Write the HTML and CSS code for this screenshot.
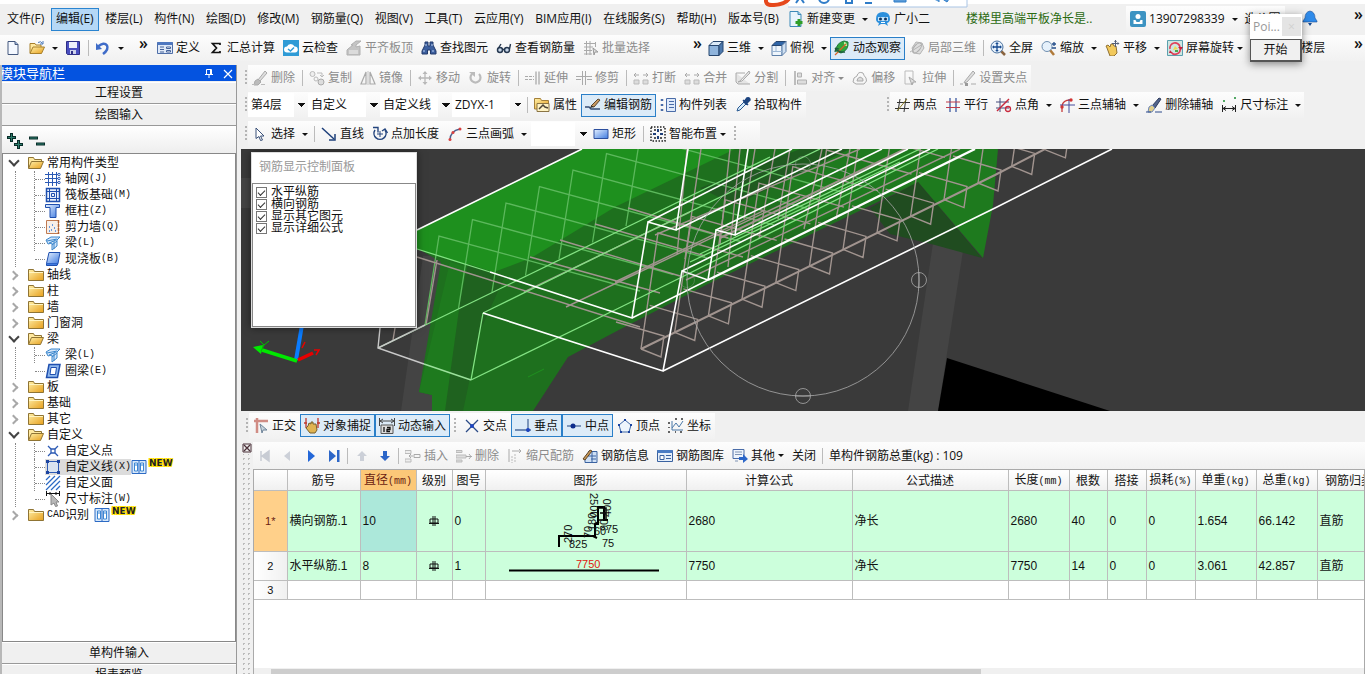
FILE: index.html
```html
<!DOCTYPE html>
<html lang="zh-CN">
<head>
<meta charset="utf-8">
<title>钢筋编辑</title>
<link rel="stylesheet" href="styles.css">
</head>
<body>
<svg class="sprite" aria-hidden="true">
<defs>
<linearGradient id="gold" x1="0" y1="0" x2="1" y2="1"><stop offset="0" stop-color="#fff0a8"/><stop offset="1" stop-color="#e79f1c"/></linearGradient>
<linearGradient id="blue" x1="0" y1="0" x2="1" y2="1"><stop offset="0" stop-color="#e4f0ff"/><stop offset="1" stop-color="#3f7be0"/></linearGradient>
</defs>
<symbol id="i-new" viewBox="0 0 16 16"><path d="M3 1.500h7l3 3v10H3z" fill="#f4f8ff" stroke="#44587e"/><path d="M10 1.500v3h3" fill="#9db4da" stroke="#44587e"/></symbol>
<symbol id="i-open" viewBox="0 0 16 16"><path d="M1 13V3.500h5l1 1.500h5v2" fill="#ffe9a0" stroke="#a8802c"/><path d="M1 13.500 4 7h11.500l-3 6.500z" fill="url(#gold)" stroke="#a8802c"/><path d="M9 2.500q3-2 4.500 1M14 1v3h-3" fill="none" stroke="#4a78b8"/></symbol>
<symbol id="i-save" viewBox="0 0 16 16"><path d="M1.500 1.500h13v13h-12l-1-1z" fill="#4a4fc0" stroke="#2e2f86"/><path d="M4 2h8v6H4z" fill="#eef1fb"/><path d="M5 10h6v4H5z" fill="#cdd2ea"/><path d="M6 11h2v3H6z" fill="#2e2f86"/></symbol>
<symbol id="i-undo" viewBox="0 0 16 16"><path d="M3 6.500Q9 1.500 12 5.500 14 9.500 8 14" fill="none" stroke="#3f6cc8" stroke-width="2.500"/><path d="M1 3v7l6-1z" fill="#3f6cc8"/></symbol>
<symbol id="i-define" viewBox="0 0 16 16"><path d="M.5 2.500h15v11H.5z" fill="#dfe9f8" stroke="#4f6fa8"/><path d="M.5 2h15v3H.5z" fill="#4f78c0"/><path d="M3 7h4M3 9.500h4M3 12h4" stroke="#44629a"/><path d="M9.500 7h4v1.500h-4zM9.500 10.500h4V12h-4z" fill="#fff" stroke="#44629a"/></symbol>
<symbol id="i-sum" viewBox="0 0 16 16"><path d="M12 5V3.500H4.500L8.500 8l-4 4.500H12V11" fill="none" stroke="#111" stroke-width="1.700"/></symbol>
<symbol id="i-cloud" viewBox="0 0 16 16"><path d="M0 0h16v16H0z" fill="#2f9bd6"/><path d="M4 12.500a3 3 0 0 1 0-6 4 4 0 0 1 7.500 0 3 3 0 0 1 .5 6z" fill="#fff"/><path d="m5 9 2.500 2L11 7.500" fill="none" stroke="#2f9bd6" stroke-width="1.500"/></symbol>
<symbol id="i-slab" viewBox="0 0 16 16"><path d="M2 9 7 5l-2 0 5-4 5 0-5 4v2l4-1v9H1v-5z" fill="#c4c4c4" stroke="#b0b0b0"/><path d="M3 11h9M3 13h9" stroke="#f2f2f2"/></symbol>
<symbol id="i-find" viewBox="0 0 16 16"><path d="M4 2h3v4h2V2h3v3l3 6v3H9.500v-4h-3v4H1v-3l3-6z" fill="#3c5f9e" stroke="#223a6a"/><path d="M3 10v2M12 10v2M5 4v2M11 4v2" stroke="#bcd2f4"/></symbol>
<symbol id="i-glasses" viewBox="0 0 16 16"><circle cx="4" cy="10" r="2.500" fill="#c8d8ea" stroke="#25374f" stroke-width="1.500"/><circle cx="11" cy="10" r="2.500" fill="#c8d8ea" stroke="#25374f" stroke-width="1.500"/><path d="M6.500 9.500h2M2.500 8 5 4M13.500 9l1-5" fill="none" stroke="#25374f" stroke-width="1.400"/></symbol>
<symbol id="i-batch" viewBox="0 0 16 16"><path d="M1 3.500h11M1 7h9M1 10.500h8M1 14h8M3.500 1v14M7 1v14M12.500 2v5" stroke="#aaa" fill="none"/><path d="m10 8 5 4-3 0-1 3z" fill="#ddd" stroke="#999"/></symbol>
<symbol id="i-cube" viewBox="0 0 16 16"><path d="M1 5.500h10v10H1z" fill="#8fb4dc" stroke="#27466e"/><path d="m1 5.500 4-4h10l-4 4z" fill="#dbeaf8" stroke="#27466e"/><path d="m11 5.500 4-4v10l-4 4z" fill="#4d79ad" stroke="#27466e"/></symbol>
<symbol id="i-topview" viewBox="0 0 16 16"><path d="M1 5.500h10v10H1z" fill="#eef5fc" stroke="#5d7fa8"/><path d="m1 5.500 4-4h10l-4 4z" fill="#2f65a8" stroke="#27466e"/><path d="m11 5.500 4-4v10l-4 4z" fill="#cfe0f2" stroke="#5d7fa8"/><path d="M5 6v5.500H1M5 11.500h6" fill="none" stroke="#9bb6d4"/></symbol>
<symbol id="i-orbit" viewBox="0 0 16 16"><path d="M2 11Q2 3 10 1l4 1q1 8-7 11z" fill="#32a53c" stroke="#1d7a3c"/><path d="M10 3q2 0 2 3" stroke="#c6f0a8" stroke-width="2" fill="none"/><path d="M1 15 12 4" stroke="#d8642a" stroke-width="1.200"/><path d="M1 8q4 5 10 4M1 12l1-4 3 1" fill="none" stroke="#1d5d3c" stroke-width="1.300"/></symbol>
<symbol id="i-orbitg" viewBox="0 0 16 16"><path d="m3 8 4-6 6 1 2 5-4 6-6-1z" fill="#ddd" stroke="#b4b4b4"/><ellipse cx="8" cy="8" rx="3" ry="6" transform="rotate(40 8 8)" fill="none" stroke="#aaa"/><path d="m1 12 13-8" stroke="#b4b4b4"/></symbol>
<symbol id="i-full" viewBox="0 0 16 16"><path d="m11 11 4 4" stroke="#8a6440" stroke-width="2.500"/><circle cx="7" cy="7" r="6" fill="#e6f1fb" stroke="#49719f"/><path d="M7 3v8M3 7h8" stroke="#174a90" stroke-width="1.300"/><path d="m7 2 1.800 2H5.200zM7 12l1.800-2H5.200zM2 7l2-1.800v3.600zM12 7l-2-1.800v3.600z" fill="#174a90"/></symbol>
<symbol id="i-zoom" viewBox="0 0 16 16"><path d="m9 10 4 5" stroke="#b07a3a" stroke-width="2.500"/><circle cx="6" cy="6.500" r="5" fill="#e6f1fb" stroke="#6f8fb0"/><path d="M13 2v4M11 4h4M11 8h4" stroke="#28508c" stroke-width="1.300"/></symbol>
<symbol id="i-pan" viewBox="0 0 16 16"><path d="M3 8 2 6l2-1 2 2 1-3 2 0 1 2 2 0 1 7-3 3H6z" fill="#f2c95c" stroke="#8f7034"/><path d="M11.500 0v7M8 3.500h7" stroke="#55607a"/><path d="m11.500 0 1.500 2h-3zM15.500 3.500l-2-1.500v3z" fill="#55607a"/></symbol>
<symbol id="i-rotv" viewBox="0 0 16 16"><path d="M.5 .5h15v15H.5z" fill="#cfe6e2" stroke="#5ba0ae"/><path d="M3 9a5 5 0 0 1 10-2" fill="none" stroke="#e0405a" stroke-width="1.600"/><path d="M13 8a5 5 0 0 1-9 4" fill="none" stroke="#e0405a" stroke-width="1.600"/><path d="M11 7h5l-2 3zM5 13l-3 0 1-3z" fill="#c8203c"/><path d="m6 10 2-4 3 3z" fill="#f0dc50"/><path d="M8 10h3v2H8z" fill="#4ba84e"/></symbol>
<symbol id="i-newchg" viewBox="0 0 16 16"><path d="M2 .5h8l3 3v12H2z" fill="#e8f4fc" stroke="#3d8ab8"/><path d="M10 .5v3h3" fill="#9ccbe6" stroke="#3d8ab8"/><path d="M11 8v7M7.500 11.500h7" stroke="#2f9e28" stroke-width="3"/></symbol>
<symbol id="i-bot" viewBox="0 0 16 16"><path d="M8 1q7 0 7 7 0 3-3 4l1 3-3-2H6l-3 2 1-3Q1 11 1 8q0-7 7-7z" fill="#2b8fdc"/><path d="M3 6h10v4H3z" fill="#bfe2fb"/><circle cx="5.500" cy="8" r="1.500" fill="#10355e"/><circle cx="10.500" cy="8" r="1.500" fill="#10355e"/><path d="M6 11.500h4" stroke="#fff"/></symbol>
<symbol id="i-user" viewBox="0 0 16 16"><rect width="16" height="16" rx="2" fill="#3c93c2"/><circle cx="8" cy="5.500" r="2.500" fill="#fff"/><path d="M3.500 9v4h9V9l-2 0-1 2h-3l-1-2z" fill="#fff"/></symbol>
<symbol id="i-bell" viewBox="0 0 16 16"><path d="M8 1q5 1 5 7l2 3v1H1v-1l2-3q0-6 5-7z" fill="#2f8bea" stroke="#1d4f96" stroke-width=".6"/><path d="M6 13h4l-2 3z" fill="#174a90"/></symbol>
<symbol id="i-erase" viewBox="0 0 16 16"><path d="m6 10 7-9 2 2-7 8z" fill="#ddd" stroke="#aaa"/><path d="m3 11 3-2 3 3-3 3H2z" fill="#bbb" stroke="#aaa"/><path d="M0 14.500h3M9 14.500h4" stroke="#bbb"/></symbol>
<symbol id="i-copy" viewBox="0 0 16 16"><circle cx="3.500" cy="4" r="2.500" fill="#eee" stroke="#bbb"/><circle cx="7" cy="9" r="2" fill="none" stroke="#bbb"/><circle cx="12" cy="12" r="3" fill="#ddd" stroke="#aaa"/><path d="M8 3h5v4M11 5l2 2 2-2" fill="none" stroke="#bbb"/></symbol>
<symbol id="i-mirror" viewBox="0 0 16 16"><path d="M6 2v12H1zM10 2v12h5z" fill="none" stroke="#aaa" stroke-width="1.200"/><path d="M8 1v14" stroke="#c4c4c4"/></symbol>
<symbol id="i-move" viewBox="0 0 16 16"><path d="M8 2v12M2 8h12" stroke="#b8b8b8" stroke-width="1.300"/><path d="m8 1 2.500 3h-5zM8 15l2.500-3h-5zM1 8l3-2.500v5zM15 8l-3-2.500v5z" fill="#b8b8b8"/></symbol>
<symbol id="i-rot" viewBox="0 0 16 16"><path d="M4 4a5 5 0 1 0 7 0" fill="none" stroke="#bbb" stroke-width="2.200"/><path d="M1 2h6v5z" fill="#bbb"/></symbol>
<symbol id="i-extend" viewBox="0 0 16 16"><path d="M0 6.500h9M0 9.500h9" stroke="#aaa" stroke-dasharray="3 1"/><path d="M11 1.500v13M14 1.500v13" stroke="#aaa" stroke-width="1.300"/></symbol>
<symbol id="i-trim" viewBox="0 0 16 16"><path d="M0 6.500h16M0 9.500h5M11 9.500h5M6.500 1v14M9.500 1v14" stroke="#aaa"/></symbol>
<symbol id="i-break" viewBox="0 0 16 16"><path d="M1 10h5v4H1zM10 10h5v4h-5z" fill="#ddd" stroke="#bbb"/><path d="M1 5h5M10 5h5M3 3 1 5l2 2M13 3l2 2-2 2" fill="none" stroke="#aaa"/></symbol>
<symbol id="i-split" viewBox="0 0 16 16"><path d="M1 3h9M1 3v9l2 2h12M5 11 14 1l1 2-8 8-4 1z" fill="#e4e4e4" stroke="#aaa"/></symbol>
<symbol id="i-align" viewBox="0 0 16 16"><path d="M3 1v14" stroke="#aaa" stroke-width="1.500"/><path d="M5.500 3h4v4h-4zM5.500 10h9v4h-9z" fill="#ddd" stroke="#b0b0b0"/></symbol>
<symbol id="i-offset" viewBox="0 0 16 16"><path d="M1 12q0-5 4-6 1-5 6-3 1 3 3 5 2 3-2 6H4z" fill="none" stroke="#aaa"/><path d="M5 11q0-3 3-4 4 1 3 4z" fill="#ddd" stroke="#aaa"/></symbol>
<symbol id="i-stretch" viewBox="0 0 16 16"><path d="M2 1h8v13H2z" fill="none" stroke="#bbb"/><path d="m6 7 7 5-3 0-1 3z" fill="#ddd" stroke="#aaa"/></symbol>
<symbol id="i-grip" viewBox="0 0 16 16"><path d="m5 11 8-10 2 2-8 9-3 1z" fill="#ddd" stroke="#aaa"/><path d="M0 14h3M11 14h5" stroke="#aaa"/><path d="M5 13h3v3H5z" fill="#999"/></symbol>
<symbol id="i-prop" viewBox="0 0 16 16"><path d="M.5 12V1.500h6l1 2h7V12z" fill="url(#gold)" stroke="#a4803a"/><path d="M3 6.500h12v8H3z" fill="#fff3c4" stroke="#8a7444"/><path d="m5 12 4-4 2 2 3 1" fill="none" stroke="#4d4436" stroke-width="1.500"/></symbol>
<symbol id="i-editbar" viewBox="0 0 16 16"><path d="M0 10h4l2 2h9" fill="none" stroke="#334c74" stroke-width="1.300"/><path d="m6 9 7-7 2 1-6 7z" fill="#c99a63" stroke="#5b4730"/><path d="m5 11 1-2 3 1z" fill="#222"/></symbol>
<symbol id="i-list" viewBox="0 0 16 16"><path d="M6.500 1.500h9v13h-9z" fill="#dfeafa" stroke="#4a6ca8"/><path d="M9 4.500h5M9 7.500h5M9 10.500h5" stroke="#4a6ca8"/><path d="M2 2v12" stroke="#4a6ca8" stroke-width="2.500" stroke-dasharray="2 3"/></symbol>
<symbol id="i-pick" viewBox="0 0 16 16"><path d="m2 14 1-3 6-6 2 2-6 6z" fill="#d7ecfb" stroke="#2a5a92"/><path d="m8 3 5 5M9 5l3-4q3-1 3 2l-4 4z" fill="#1d4580" stroke="#1d4580" stroke-width="1.500"/></symbol>
<symbol id="i-ax2" viewBox="0 0 16 16"><path d="M6 2 4 14M12 1l-2 14" stroke="#333"/><path d="M1 11.500h14M3 5.500h13" stroke="#333"/><path d="M3 14 13 2" stroke="#8b7c22"/></symbol>
<symbol id="i-axp" viewBox="0 0 16 16"><path d="M5 1v14M11 1v14" stroke="#2e4c9a" stroke-width="1.200"/><path d="M1 5h14M1 10.500h14" stroke="#c03a4a" stroke-width="1.200"/></symbol>
<symbol id="i-axa" viewBox="0 0 16 16"><path d="M0 5h13M0 11h13M4 1v14" stroke="#444a7a"/><path d="M1 14 13 2" stroke="#c8283c" stroke-width="1.500"/><circle cx="12" cy="12" r="2.500" fill="none" stroke="#c8283c" stroke-width="1.300"/></symbol>
<symbol id="i-ax3" viewBox="0 0 16 16"><path d="M3 15V9q1-6 8-6" fill="none" stroke="#c83c3c" stroke-width="1.300"/><path d="M1 8h15M10 2v14" stroke="#444a9a"/><circle cx="3" cy="10" r="1.700" fill="#d03434"/><circle cx="12" cy="3" r="1.700" fill="#d03434"/></symbol>
<symbol id="i-delax" viewBox="0 0 16 16"><path d="m6 9 7-8 2 1-6 9z" fill="#52658c" stroke="#2d3a5c"/><path d="m3 10 3-2 3 3-3 4H2z" fill="#e0cf8a" stroke="#6d86b8"/><path d="M0 15h5M9 15h7" stroke="#2c4a8c"/></symbol>
<symbol id="i-dim" viewBox="0 0 16 16"><path d="M1.500 8v7M14.500 8v7M2 11.500h12M5 9.500l-3 2 3 2M11 9.500l3 2-3 2" fill="none" stroke="#222"/><path d="M2 3h2v2H2zM13 0h2v2h-2z" fill="#52a864"/></symbol>
<symbol id="i-arrow" viewBox="0 0 16 16"><path d="m4 2 8 8H8.500l2 4-2 .5-1.500-4L4 12.500z" fill="#fff" stroke="#3a5078"/></symbol>
<symbol id="i-line" viewBox="0 0 16 16"><path d="m1 2 12 11" stroke="#1d3f7a" stroke-width="1.500"/><path d="M14 8v6H8" fill="none" stroke="#1d3f7a" stroke-width="1.500"/></symbol>
<symbol id="i-ptlen" viewBox="0 0 16 16"><path d="M3 4a6 6 0 1 0 10 0" fill="none" stroke="#24457e" stroke-width="1.500"/><path d="M1 1.500h5v5M15.500 7 13 3l-3 2" fill="none" stroke="#24457e" stroke-width="1.400"/><path d="M8 5v6M5 8h6" stroke="#24457e"/></symbol>
<symbol id="i-arc" viewBox="0 0 16 16"><path d="M3 14Q3 5 13 3" fill="none" stroke="#4a5f8c" stroke-width="1.300"/><circle cx="3" cy="13.500" r="1.500" fill="#d84040"/><circle cx="6" cy="6.500" r="1.500" fill="#d84040"/><circle cx="13" cy="3" r="1.500" fill="#d84040"/></symbol>
<symbol id="i-rect" viewBox="0 0 16 16"><path d="M1 3.500h14v9H1z" fill="url(#blue)" stroke="#2c4f9e"/></symbol>
<symbol id="i-smart" viewBox="0 0 16 16"><path d="M1 1h14v14H1z" fill="none" stroke="#222" stroke-width="1.500" stroke-dasharray="1.500 1.500"/><path d="M8 3v3M8 10v3M3 8h3M10 8h3" stroke="#1d3f7a" stroke-width="2"/><path d="M4 4h2M10 4h2M4 12h2M10 12h2" stroke="#222" stroke-width="1.500"/></symbol>
<symbol id="i-ortho" viewBox="0 0 16 16"><path d="M1 3h14M4 0v15" stroke="#d08c84" stroke-width="2.500"/><path d="m7 6 7 6h-4l-1 3z" fill="#c8d4dc" stroke="#70859a"/></symbol>
<symbol id="i-snap" viewBox="0 0 16 16"><path d="M2 0v10M14 0v10M0 5h3M13 5h3" stroke="#c0392b" stroke-width="1.300"/><path d="m4 8 1-3 2 1V4h2v2l3 0 1 6-2 3H6l-4-5z" fill="#e0b452" stroke="#76602e"/></symbol>
<symbol id="i-dyn" viewBox="0 0 16 16"><path d="M.5 0v8M15.500 0v8M1 3h14M4 1 1 3l3 2M12 1l3 2-3 2" fill="none" stroke="#444"/><path d="M2 7h12v8.500H2z" fill="#ddd" stroke="#555"/><path d="M5 9v5M8 9.500h3v2H8v2h3" fill="none" stroke="#111" stroke-width="1.300"/></symbol>
<symbol id="i-cross" viewBox="0 0 16 16"><path d="m2 2 12 12M14 2 2 14" stroke="#2a4a86" stroke-width="1.300"/><circle cx="8" cy="8" r="2" fill="#1c44c0"/></symbol>
<symbol id="i-perp" viewBox="0 0 16 16"><path d="M13 1v13M0 12h16" stroke="#4a6a9a" stroke-width="1.300"/><circle cx="13" cy="12" r="2" fill="#1c44c0"/></symbol>
<symbol id="i-mid" viewBox="0 0 16 16"><path d="M1 8h14" stroke="#4a6a9a" stroke-width="1.300"/><circle cx="7" cy="8" r="2.500" fill="#0c2c8c"/></symbol>
<symbol id="i-vert" viewBox="0 0 16 16"><path d="m8 2 6 5-2 7H4L2 7z" fill="#eef5fc" stroke="#3c66a8"/><path d="M7 1h2v2H7zM1 6h2v2H1zM13 6h2v2h-2zM3 13h2v2H3zM11 13h2v2h-2z" fill="#1c44a0"/></symbol>
<symbol id="i-coord" viewBox="0 0 16 16"><path d="M4 3v9h11M4 10l4-5 3 4 4-6" fill="none" stroke="#4a78a8"/><path d="M1 4v2M1 9v1M1 13v2M7 1h2M13 1h2M7 14h1M12 14h2" stroke="#333" stroke-width="1.500"/></symbol>
<symbol id="i-first" viewBox="0 0 16 16"><path d="M4 3v10M5 8l7-5v10z" fill="#c8ccd4" stroke="#c8ccd4" stroke-width="1.500"/></symbol>
<symbol id="i-prev" viewBox="0 0 16 16"><path d="m4 8 6-5v10z" fill="#ccd0d8"/></symbol>
<symbol id="i-next" viewBox="0 0 16 16"><path d="M5 2v12l7-6z" fill="#2367d8"/></symbol>
<symbol id="i-last" viewBox="0 0 16 16"><path d="M3 2v12l7-6zM11 2h2.500v12H11z" fill="#2c66c8"/></symbol>
<symbol id="i-up" viewBox="0 0 16 16"><path d="m8 3 5 5h-3v5H6V8H3z" fill="#ccd0d8"/></symbol>
<symbol id="i-down" viewBox="0 0 16 16"><path d="m8 13 5-5h-3V3H6v5H3z" fill="#2c66c8"/></symbol>
<symbol id="i-ins" viewBox="0 0 16 16"><path d="M0 2.500h6v3H0zM0 11h6v3H0z" fill="#eee" stroke="#bbb"/><path d="M9 6.500h6v3H9zM8 8H4M6 6 4 8l2 2" fill="none" stroke="#aaa"/></symbol>
<symbol id="i-delrow" viewBox="0 0 16 16"><path d="M0 2.500h6v2H0zM0 12h6v2H0zM0 7h10v3H0z" fill="#ddd" stroke="#bbb"/><path d="M10 8.500h6M13 6l2 2.500-2 2.500" fill="none" stroke="#aaa"/></symbol>
<symbol id="i-scale" viewBox="0 0 16 16"><path d="M2 1v13M5 3h9M12 1l2 2-2 2" fill="none" stroke="#aaa"/><path d="M5 8v7M8 6v9" stroke="#bbb" stroke-dasharray="2 1"/></symbol>
<symbol id="i-info" viewBox="0 0 16 16"><path d="M6 3.500h9v11H3V9" fill="#cfe0f5" stroke="#3a62a0"/><path d="M6 8h8M9 11h5M10 4v10" stroke="#3a62a0"/><path d="m1 11 7-9 2 1-7 9z" fill="#c89858" stroke="#5f4525"/></symbol>
<symbol id="i-lib" viewBox="0 0 16 16"><path d="M.5 2.500h15v11H.5z" fill="#e6effa" stroke="#3a62a0"/><path d="M.5 2h15v3H.5z" fill="#4a7cc4"/><path d="M3 7.500h4v4H3zM9 7.500h5M9 10.500h5" fill="#fff" stroke="#3a62a0"/></symbol>
<symbol id="i-other" viewBox="0 0 16 16"><path d="M1 1.500h11v9H1z" fill="#eef4fc" stroke="#4a6ca8"/><path d="M3 4h7M3 6.500h7M3 13h3" stroke="#7f93b4"/><path d="M7 9h4V6l5 5-5 4v-3H7z" fill="#2c66c8"/></symbol>
<symbol id="i-folder" viewBox="0 0 16 16"><path d="M.5 13.500v-11h5l1 2h9v9z" fill="url(#gold)" stroke="#8f7434"/><path d="M1 5.500h14" stroke="#fff4c0"/></symbol>
<symbol id="i-folderopen" viewBox="0 0 16 16"><path d="M.5 13V2.500h5l1 2h7V7" fill="#ffe9a0" stroke="#8f7434"/><path d="m.5 13.500 3-7h12l-3 7z" fill="url(#gold)" stroke="#8f7434"/></symbol>
<symbol id="i-net" viewBox="0 0 16 16"><path d="M3.500 1v14M7.500 1v14M11.500 1v14M0 3.500h13M0 7.500h13M0 11.500h13" stroke="#2c5ab4"/><circle cx="14" cy="3.500" r="1.200" fill="none" stroke="#2c5ab4"/><circle cx="14" cy="7.500" r="1.200" fill="none" stroke="#2c5ab4"/><circle cx="14" cy="11.500" r="1.200" fill="none" stroke="#2c5ab4"/></symbol>
<symbol id="i-raft" viewBox="0 0 16 16"><path d="M1.500 1.500h13v13h-13z" fill="#e8f1fd" stroke="#1f4fae" stroke-width="1.500"/><path d="M4.500 2v12M11.500 2v12M2 4.500h12M2 11.500h12M6.500 6.500h3v3h-3z" fill="none" stroke="#1f4fae"/></symbol>
<symbol id="i-col" viewBox="0 0 16 16"><path d="M.5 1.500h14v3H11v10H5v-10H.5z" fill="url(#blue)" stroke="#1f4fae"/></symbol>
<symbol id="i-wall" viewBox="0 0 16 16"><path d="M1.500 1.500h12v13h-12z" fill="#f7efe8" stroke="#c07a50"/><path d="M4 8h1M7 6h1M6 11h1M9 9h1M10 12h1M4 12h1" stroke="#3a7cd8" stroke-width="1.500"/><path d="M13.500 1v14" stroke="#b06030" stroke-width="1.500" stroke-dasharray="3 1"/></symbol>
<symbol id="i-beam" viewBox="0 0 16 16"><path d="m1 5 5-3h9l-3 3v6l-5 4V8L3 9z" fill="#d4e6fa" stroke="#3a86cc"/><path d="m2 6 10-2M9 6v8M4 8l7-3M7 10l5-4" stroke="#3a86cc"/></symbol>
<symbol id="i-plate" viewBox="0 0 16 16"><path d="M4 1.500h11l-2 11H1.500z" fill="url(#blue)" stroke="#1f4fae"/><path d="M1.500 12.500v2H12l1-2" fill="#3f7be0" stroke="#1f4fae"/></symbol>
<symbol id="i-ring" viewBox="0 0 16 16"><path d="M4 1.500h11l-2.500 13H1.500z" fill="#8fb8ee" stroke="#1f4fae" stroke-width="1.500"/><path d="M6 4.500h5.500l-1 7H5z" fill="#fff" stroke="#1f4fae"/></symbol>
<symbol id="i-upt" viewBox="0 0 16 16"><path d="m3 3 3 3M13 3l-3 3M3 13l3-3M13 13l-3-3" stroke="#2c5ab4" stroke-width="1.300"/><path d="M6 6h4v4H6z" fill="#fff" stroke="#2c5ab4" stroke-width="1.300"/></symbol>
<symbol id="i-uline" viewBox="0 0 16 16"><path d="M2.500 2.500h11v11h-11z" fill="#d9e3f0" stroke="#2c5ab4"/><path d="M1 1h3v3H1zM12 1h3v3h-3zM1 12h3v3H1zM12 12h3v3h-3z" fill="#1c44a0"/></symbol>
<symbol id="i-uface" viewBox="0 0 16 16"><path d="M1 5 5 1M1 10l9-9M1 15 15 1M6 15l9-9M11 15l4-4" stroke="#2c6ac4" stroke-width="1.200"/></symbol>
<symbol id="i-dimc" viewBox="0 0 16 16"><path d="M1.500 0v5M14.500 0v5M1 2.500h14M5 1v3M11 1v3" stroke="#111"/><path d="m6 3 8 8h-3l1.500 4-2 .5L9 12l-3 2z" fill="#b8b8b8" stroke="#888"/></symbol>
<symbol id="i-book" viewBox="0 0 16 16"><path d="M1 1.500h14v13H1z" fill="#d7e8fa" stroke="#2c6ac4"/><path d="M3.500 4h3v8h-3zM9.500 4h3v8h-3zM3.500 6h3M9.500 6h3" fill="#fff" stroke="#3c86d4"/><path d="M8 2v12" stroke="#2c6ac4"/></symbol>
<symbol id="i-plus2" viewBox="0 0 16 16"><path d="M4.500 0v9M0 4.500h9M11.500 7v9M7 11.500h9" stroke="#082c28" stroke-width="3"/><path d="M4.500 1v7M1 4.500h7M11.500 8v7M8 11.500h7" stroke="#2c7c6c"/></symbol>
<symbol id="i-minus2" viewBox="0 0 16 16"><path d="M0 5h9M7 11h9" stroke="#082c28" stroke-width="3"/><path d="M1 5h7M8 11h7" stroke="#2c7c6c"/></symbol>
<symbol id="i-grade" viewBox="0 0 12 12"><path d="M2 4h8v4H2zM1 8.500h10M5 1v10M7 1v10" fill="none" stroke="#111"/></symbol>
</svg>

<div class="app">
<header class="top">
 <div class="desk">
  <svg class="ime" viewBox="0 0 204 8" aria-hidden="true"><path d="M3-4Q-1 6 10 5 25 4 27-6" fill="none" stroke="#e6481c" stroke-width="4"/><path d="M28-3h175v10H24" fill="#fff" stroke="#a9c4e4"/><path d="m32 3 4-6 4 6M82-2v5h6V-2M101 3h7" fill="none" stroke="#2f7cc8" stroke-width="2"/><circle cx="60" cy="-2" r="5" fill="none" stroke="#2f7cc8" stroke-width="2"/><path d="M130-4h12v6h-12zM165-3h10v5M177-2l6 4 4-6" fill="#5b9bd8" stroke="#2f7cc8"/></svg>
 </div>
 <div class="menurow">
  <nav class="menu">
   <button>文件(F)</button><button class="on">编辑(E)</button><button>楼层(L)</button><button>构件(N)</button><button>绘图(D)</button><button>修改(M)</button><button>钢筋量(Q)</button><button>视图(V)</button><button>工具(T)</button><button>云应用(Y)</button><button>BIM应用(I)</button><button>在线服务(S)</button><button>帮助(H)</button><button>版本号(B)</button>
  </nav>
  <button class="t"><svg class="ic"><use href="#i-newchg"/></svg>新建变更</button><button class="dd" aria-label="更多"></button>
  <button class="t"><svg class="ic"><use href="#i-bot"/></svg>广小二</button>
  <a class="tip" href="#">楼梯里高端平板净长是..</a>
  <div class="bar account"><button class="t"><svg class="ic"><use href="#i-user"/></svg>13907298339</button><button class="dd" aria-label="账号"></button><button class="t">造价圈</button></div>
  <button class="bell" aria-label="通知"><svg class="ic"><use href="#i-bell"/></svg></button>
  <span class="more">»</span>
 </div>
 <div class="row">
  <div class="bar std"><button class="t"><svg class="ic"><use href="#i-new"/></svg></button><button class="t"><svg class="ic"><use href="#i-open"/></svg></button><button class="dd" aria-label="最近"></button><button class="t"><svg class="ic"><use href="#i-save"/></svg></button><i class="sep"></i><button class="t"><svg class="ic"><use href="#i-undo"/></svg></button><button class="dd" aria-label="撤销列表"></button><span class="more">»</span></div>
  <div class="bar calc"><button class="t"><svg class="ic"><use href="#i-define"/></svg>定义</button><button class="t"><svg class="ic"><use href="#i-sum"/></svg>汇总计算</button><button class="t"><svg class="ic"><use href="#i-cloud"/></svg>云检查</button><button class="t" disabled><svg class="ic"><use href="#i-slab"/></svg>平齐板顶</button><button class="t"><svg class="ic"><use href="#i-find"/></svg>查找图元</button><button class="t"><svg class="ic"><use href="#i-glasses"/></svg>查看钢筋量</button><button class="t" disabled><svg class="ic"><use href="#i-batch"/></svg>批量选择</button><span class="more">»</span></div>
  <div class="bar grow"><button class="t"><svg class="ic"><use href="#i-cube"/></svg>三维</button><button class="dd" aria-label="三维选项"></button><button class="t"><svg class="ic"><use href="#i-topview"/></svg>俯视</button><button class="dd" aria-label="俯视选项"></button><button class="t on"><svg class="ic"><use href="#i-orbit"/></svg>动态观察</button><button class="t" disabled><svg class="ic"><use href="#i-orbitg"/></svg>局部三维</button><i class="sep"></i><button class="t"><svg class="ic"><use href="#i-full"/></svg>全屏</button><button class="t"><svg class="ic"><use href="#i-zoom"/></svg>缩放</button><button class="dd" aria-label="缩放选项"></button><button class="t"><svg class="ic"><use href="#i-pan"/></svg>平移</button><button class="dd" aria-label="平移选项"></button><button class="t arrow"><svg class="ic"><use href="#i-rotv"/></svg>屏幕旋转</button><button class="t floors">选择楼层</button><span class="more">»</span></div>
 </div>
 <div class="poi" role="dialog" aria-label="Poi"><div class="poi-title"><span>Poi...</span><button aria-label="关闭">×</button></div><button class="poi-start">开始</button></div>
</header>

<div class="body">
<aside class="side">
 <div class="side-title"><h2>模块导航栏</h2><svg class="ic" viewBox="0 0 16 16"><path d="M5.500 9V4.500h5V9M4 9.500h8M8 10v3M9.500 4.500V9" fill="none" stroke="#fff"/></svg><svg class="ic" viewBox="0 0 16 16"><path d="m4 5 8 8M12 5l-8 8" stroke="#fff" stroke-width="1.200"/></svg></div>
 <button class="sec">工程设置</button>
 <button class="sec">绘图输入</button>
 <div class="side-tools"><button aria-label="展开"><svg class="ic"><use href="#i-plus2"/></svg></button><button aria-label="折叠"><svg class="ic"><use href="#i-minus2"/></svg></button></div>
 <ul class="tree">
  <li class="open"><div class="node"><svg class="ic"><use href="#i-folderopen"/></svg>常用构件类型</div>
   <ul><li><svg class="ic"><use href="#i-net"/></svg>轴网<span>(J)</span></li><li><svg class="ic"><use href="#i-raft"/></svg>筏板基础<span>(M)</span></li><li><svg class="ic"><use href="#i-col"/></svg>框柱<span>(Z)</span></li><li><svg class="ic"><use href="#i-wall"/></svg>剪力墙<span>(Q)</span></li><li><svg class="ic"><use href="#i-beam"/></svg>梁<span>(L)</span></li><li><svg class="ic"><use href="#i-plate"/></svg>现浇板<span>(B)</span></li></ul></li>
  <li><div class="node"><svg class="ic"><use href="#i-folder"/></svg>轴线</div></li>
  <li><div class="node"><svg class="ic"><use href="#i-folder"/></svg>柱</div></li>
  <li><div class="node"><svg class="ic"><use href="#i-folder"/></svg>墙</div></li>
  <li><div class="node"><svg class="ic"><use href="#i-folder"/></svg>门窗洞</div></li>
  <li class="open"><div class="node"><svg class="ic"><use href="#i-folderopen"/></svg>梁</div>
   <ul><li><svg class="ic"><use href="#i-beam"/></svg>梁<span>(L)</span></li><li><svg class="ic"><use href="#i-ring"/></svg>圈梁<span>(E)</span></li></ul></li>
  <li><div class="node"><svg class="ic"><use href="#i-folder"/></svg>板</div></li>
  <li><div class="node"><svg class="ic"><use href="#i-folder"/></svg>基础</div></li>
  <li><div class="node"><svg class="ic"><use href="#i-folder"/></svg>其它</div></li>
  <li class="open"><div class="node"><svg class="ic"><use href="#i-folderopen"/></svg>自定义</div>
   <ul><li><svg class="ic"><use href="#i-upt"/></svg>自定义点</li><li><div class="sel"><svg class="ic"><use href="#i-uline"/></svg>自定义线<span>(X)</span></div><svg class="ic book"><use href="#i-book"/></svg><b class="new">NEW</b></li><li><svg class="ic"><use href="#i-uface"/></svg>自定义面</li><li><svg class="ic"><use href="#i-dimc"/></svg>尺寸标注<span>(W)</span></li></ul></li>
  <li><div class="node"><svg class="ic"><use href="#i-folder"/></svg><span>CAD</span>识别<svg class="ic cad"><use href="#i-book"/></svg><b class="new">NEW</b></div></li>
 </ul>
 <button class="sec">单构件输入</button>
 <button class="sec last">报表预览</button>
</aside>

<main class="main">
 <div class="row edit"><i class="grip"></i><div class="bar"><button class="t" disabled><svg class="ic"><use href="#i-erase"/></svg>删除</button><i class="sep"></i><button class="t" disabled><svg class="ic"><use href="#i-copy"/></svg>复制</button><button class="t" disabled><svg class="ic"><use href="#i-mirror"/></svg>镜像</button><i class="sep"></i><button class="t" disabled><svg class="ic"><use href="#i-move"/></svg>移动</button><button class="t" disabled><svg class="ic"><use href="#i-rot"/></svg>旋转</button><i class="sep"></i><button class="t" disabled><svg class="ic"><use href="#i-extend"/></svg>延伸</button><button class="t" disabled><svg class="ic"><use href="#i-trim"/></svg>修剪</button><i class="sep"></i><button class="t" disabled><svg class="ic"><use href="#i-break"/></svg>打断</button><button class="t" disabled><svg class="ic"><use href="#i-break"/></svg>合并</button><button class="t" disabled><svg class="ic"><use href="#i-split"/></svg>分割</button><i class="sep"></i><button class="t arrow" disabled><svg class="ic"><use href="#i-align"/></svg>对齐</button><button class="t" disabled><svg class="ic"><use href="#i-offset"/></svg>偏移</button><button class="t" disabled><svg class="ic"><use href="#i-stretch"/></svg>拉伸</button><i class="sep"></i><button class="t" disabled><svg class="ic"><use href="#i-grip"/></svg>设置夹点</button></div></div>

 <div class="row"><i class="grip"></i><div class="bar gapped">
   <select class="c1" aria-label="楼层"><option>第4层</option></select><select class="c2" aria-label="构件类别"><option>自定义</option></select><select class="c2" aria-label="构件类型"><option>自定义线</option></select><select class="c2" aria-label="构件名称"><option>ZDYX-1</option></select>
   <i class="sep"></i><button class="t"><svg class="ic"><use href="#i-prop"/></svg>属性</button><button class="t on"><svg class="ic"><use href="#i-editbar"/></svg>编辑钢筋</button><button class="t"><svg class="ic"><use href="#i-list"/></svg>构件列表</button><button class="t"><svg class="ic"><use href="#i-pick"/></svg>拾取构件</button></div>
   <div class="axis"><i class="grip"></i><div class="bar"><button class="t"><svg class="ic"><use href="#i-ax2"/></svg>两点</button><button class="t"><svg class="ic"><use href="#i-axp"/></svg>平行</button><button class="t"><svg class="ic"><use href="#i-axa"/></svg>点角</button><button class="dd" aria-label="点角选项"></button><button class="t"><svg class="ic"><use href="#i-ax3"/></svg>三点辅轴</button><button class="dd" aria-label="辅轴选项"></button><button class="t"><svg class="ic"><use href="#i-delax"/></svg>删除辅轴</button><button class="t"><svg class="ic"><use href="#i-dim"/></svg>尺寸标注</button><button class="dd" aria-label="标注选项"></button></div></div></div>

 <div class="row draw"><i class="grip"></i><div class="bar"><button class="t"><svg class="ic"><use href="#i-arrow"/></svg>选择</button><button class="dd" aria-label="选择选项"></button><i class="sep"></i><button class="t"><svg class="ic"><use href="#i-line"/></svg>直线</button><button class="t"><svg class="ic"><use href="#i-ptlen"/></svg>点加长度</button><button class="t"><svg class="ic"><use href="#i-arc"/></svg>三点画弧</button><button class="dd" aria-label="画弧选项"></button><select class="c3" aria-label="参数"><option></option></select><button class="t"><svg class="ic"><use href="#i-rect"/></svg>矩形</button><i class="sep"></i><button class="t arrow"><svg class="ic"><use href="#i-smart"/></svg>智能布置</button><i class="grip tail"></i></div></div>

 <section class="view">
  <svg class="scene" viewBox="241 149 1124 262" preserveAspectRatio="xMinYMin slice" aria-label="三维视图">
   <defs>
    <path id="peak" d="M425 325 439 236 640 291"/>
    <path id="notch" d="M641 349l20 8 3-21-48-14M641 349l17-116 85 24"/>
    <clipPath id="low"><path d="M560 411V350L700 149H1365V411z"/></clipPath>
   </defs>
   <path fill="#3a3a3a" d="M241 149h1124v262H241z"/>
   <path fill="#444" d="M241 178h10v30h-10zM423 256l35-2-20 157h-37zM933 243l30 8-25 160h-30z"/>
   <path fill="#000" d="M947 358 1110 411H938z"/>
   <path fill="#1e701e" d="M417 248 640 149H975L915 184 708 284 615 332 568 357 533 411H432V395L419 392 441 262z"/>
   <path fill="#1e901e" d="M417 230 582 149H735L615 207 531 258 491 273 417 249z"/>
   <path fill="#1f621f" d="M468 264 505 276 480 331 463 411H436z"/>
   <path fill="#1e7a1e" d="M450 262l15 4-20 145h-13v-16l-13-3zM792 149H998L993 205 983 258 918 182 780 236z"/>
   <path fill="#1f5520" d="M700 188 800 149H850L735 205z" opacity=".8"/>
   <path fill="#204c20" d="M918 182 982 258 935 245 890 234 870 208z"/>
   <g fill="none" stroke="#5cb85c" stroke-width="1.300"><use href="#peak"/><use href="#peak" x="33.500" y="-16.500"/><use href="#peak" x="67" y="-33"/><use href="#peak" x="100.500" y="-49.500"/><use href="#peak" x="134" y="-66"/><use href="#peak" x="167.500" y="-82.500"/><use href="#peak" x="201" y="-99"/></g>
   <g fill="none" stroke="#a1948f" stroke-width="1.400" clip-path="url(#low)"><use href="#notch"/><use href="#notch" x="33.700" y="-16.600"/><use href="#notch" x="67.400" y="-33.200"/><use href="#notch" x="101" y="-49.800"/><use href="#notch" x="134.800" y="-66.400"/><use href="#notch" x="168.500" y="-83"/><use href="#notch" x="202" y="-99.600"/><use href="#notch" x="236" y="-116.200"/><use href="#notch" x="269.600" y="-132.800"/><use href="#notch" x="303" y="-149.400"/><use href="#notch" x="337" y="-166"/><use href="#notch" x="370.700" y="-182.600"/><use href="#notch" x="404.400" y="-199.200"/></g>
   <g fill="none" stroke="#a1948f" stroke-width="1.400"><path d="M417 257 640 327M524 292 690 212M566 307 800 196M437 260 426 325M393 340l2-12M615 282l150-72M655 235l205-86M686 280 960 149M687 149l-10 106M701 149l-16 110M730 149l-10 95M740 149l-12 118M755 149l-11 70M775 149l-16 90M790 149l-12 70M822 149l-18 80M850 149l-14 70M530 257l130 36M560 240l120 36M595 224l110 32M628 208l100 30"/><path stroke-width="2" d="M641 349 995 175 1045 149M720 238 905 149"/></g>
   <g fill="none" stroke="#83e283" stroke-width="1.300"><path d="M378 348 621 230 770 157M483 313 621 245 820 149M471 380 621 307 682 277 938 149M483 313 471 380M700 254 920 149M690 262 900 162M417 249 490 272"/></g>
   <g fill="none" stroke="#c8c8c8" stroke-width="1.400"><path d="M380 328 378 348 424 364M378 348 425 325"/><path stroke="#9be09b" d="M424 364 471 380"/></g>
   <g fill="none" stroke="#fff" stroke-width="1.600"><path d="M417 230 582 149M490 272 632 318 648 222 676 230 688 149M648 222 792 149M676 230 842 149M632 318 708 280 716 230 735 235 748 149M716 230 882 149M735 235 908 149M708 280 682 271 663 371 483 313M682 271 930 149M663 371 995 208 1112 149"/><path stroke-width="2.400" d="M708 280 975 149"/></g>
   <path d="m528 377 16-8" stroke="#1e901e"/>
   <g fill="none" stroke="#a9a9a9" stroke-width=".8"><circle cx="803" cy="280" r="116"/><circle cx="919" cy="280" r="7.500"/><circle cx="803" cy="396" r="7.500"/><circle cx="687" cy="280" r="7.500" opacity=".4"/><circle cx="803" cy="164" r="7.500" opacity=".5"/><path d="M919 272v15M795 396h15"/></g>
   <path stroke="#0a7cff" stroke-width="4" d="M296 360 302 325"/><path stroke="#00e800" stroke-width="3.500" d="M297 361 262 350"/><path fill="#00e800" d="m253 347 10-2-2 9z"/><path d="M260 341l4 4 5-4M264 345l-3 6" stroke="#00c000" fill="none"/><path stroke="#e80000" stroke-width="3.500" d="m298 360 15-7"/><path d="m314 350 5 0-3 5M305 342l-3 6" stroke="#e80000" fill="none" stroke-width="1.500"/>
  </svg>
  <div class="panel"><h3>钢筋显示控制面板</h3><div class="checks"><label><input type="checkbox" checked>水平纵筋</label><label><input type="checkbox" checked>横向钢筋</label><label><input type="checkbox" checked>显示其它图元</label><label><input type="checkbox" checked>显示详细公式</label></div></div>
 </section>

 <div class="row snap"><i class="grip"></i><div class="bar"><button class="t"><svg class="ic"><use href="#i-ortho"/></svg>正交</button><button class="t on"><svg class="ic"><use href="#i-snap"/></svg>对象捕捉</button><button class="t on"><svg class="ic"><use href="#i-dyn"/></svg>动态输入</button><i class="grip mid"></i><button class="t"><svg class="ic"><use href="#i-cross"/></svg>交点</button><button class="t on"><svg class="ic"><use href="#i-perp"/></svg>垂点</button><button class="t on"><svg class="ic"><use href="#i-mid"/></svg>中点</button><button class="t"><svg class="ic"><use href="#i-vert"/></svg>顶点</button><button class="t"><svg class="ic"><use href="#i-coord"/></svg>坐标</button></div></div>

 <section class="editor">
  <div class="edge"><button aria-label="关闭面板"><svg viewBox="0 0 10 10"><path d="M1 1h8v8H1z" fill="none" stroke="#4a3038"/><path d="m2 2 6 6M8 2 2 8" stroke="#4a3038" stroke-width="1.300"/></svg></button></div>
  <div class="pane">
   <div class="bar etools"><button class="t nav" disabled aria-label="首行"><svg class="ic"><use href="#i-first"/></svg></button><button class="t nav" disabled aria-label="上一行"><svg class="ic"><use href="#i-prev"/></svg></button><button class="t nav" aria-label="下一行"><svg class="ic"><use href="#i-next"/></svg></button><button class="t nav" aria-label="末行"><svg class="ic"><use href="#i-last"/></svg></button><i class="sep"></i><button class="t nav" disabled aria-label="上移"><svg class="ic"><use href="#i-up"/></svg></button><button class="t nav" aria-label="下移"><svg class="ic"><use href="#i-down"/></svg></button><i class="sep"></i><button class="t" disabled><svg class="ic"><use href="#i-ins"/></svg>插入</button><button class="t" disabled><svg class="ic"><use href="#i-delrow"/></svg>删除</button><button class="t" disabled><svg class="ic"><use href="#i-scale"/></svg>缩尺配筋</button><button class="t"><svg class="ic"><use href="#i-info"/></svg>钢筋信息</button><button class="t"><svg class="ic"><use href="#i-lib"/></svg>钢筋图库</button><button class="t arrow"><svg class="ic"><use href="#i-other"/></svg>其他</button><button class="t">关闭</button><i class="sep"></i><span class="total">单构件钢筋总重(kg) : 109</span></div>
   <div class="grid">
    <table>
     <colgroup><col class="w-no"><col class="w-name"><col class="w-dia"><col class="w-lv"><col class="w-fig"><col class="w-draw"><col class="w-calc"><col class="w-desc"><col class="w-len"><col class="w-cnt"><col class="w-lap"><col class="w-loss"><col class="w-wt"><col class="w-wt"><col class="w-kind"></colgroup>
     <thead><tr><th></th><th>筋号</th><th class="hot">直径<span>(mm)</span></th><th>级别</th><th>图号</th><th>图形</th><th>计算公式</th><th>公式描述</th><th>长度<span>(mm)</span></th><th>根数</th><th>搭接</th><th>损耗<span>(%)</span></th><th>单重<span>(kg)</span></th><th>总重<span>(kg)</span></th><th>钢筋归类</th></tr></thead>
     <tbody>
      <tr class="r1"><th>1*</th><td>横向钢筋.1</td><td class="cur">10</td><td class="lv"><svg role="img" aria-label="三级钢"><use href="#i-grade"/></svg></td><td>0</td><td class="fig"><svg viewBox="486 490 200 60"><path d="M559 546v-11h36v-12h3v-17h6v13h4M595 523l4-2M593 535l4 2" fill="none" stroke="#000" stroke-width="2"/><path d="M598 507h8v12h-8zM600 512h6" fill="none" stroke="#000" stroke-width="1.500"/><text transform="translate(590 492) rotate(90)">2500</text><text transform="translate(611 516) rotate(-90)">400</text><text transform="translate(596 530) rotate(-90)">180</text><text transform="translate(592 537) rotate(-90)">70</text><text transform="translate(608 530) rotate(-90)">90</text><text transform="translate(572 542) rotate(-90)">270</text><text x="594" y="534">60</text><text x="606" y="532">75</text><text x="602" y="546">75</text><text x="569" y="547">825</text></svg></td><td>2680</td><td>净长</td><td>2680</td><td>40</td><td>0</td><td>0</td><td>1.654</td><td>66.142</td><td>直筋</td></tr>
      <tr class="r2"><th>2</th><td>水平纵筋.1</td><td>8</td><td class="lv"><svg role="img" aria-label="三级钢"><use href="#i-grade"/></svg></td><td>1</td><td class="fig"><svg viewBox="486 551 200 28"><path d="M509 569.500h150" stroke="#000" stroke-width="2"/><text class="red" x="576" y="567">7750</text></svg></td><td>7750</td><td>净长</td><td>7750</td><td>14</td><td>0</td><td>0</td><td>3.061</td><td>42.857</td><td>直筋</td></tr>
      <tr class="r3"><th>3</th><td></td><td></td><td></td><td></td><td></td><td></td><td></td><td></td><td></td><td></td><td></td><td></td><td></td><td></td></tr>
     </tbody>
    </table>
    <div class="hscroll"><i></i></div>
   </div>
  </div>
 </section>
</main>
</div>
</div>
</body>
</html>
```
FILE: styles.css
```css
* { box-sizing: border-box; }
body { margin: 0; background: #f0f0f0; color: #111; font: 12px/16px "Open Sans", "Noto Sans", "Noto Sans CJK SC", sans-serif; }
button, select { font: inherit; color: inherit; margin: 0; }
ul { list-style: none; margin: 0; padding: 0; }
h2, h3 { margin: 0; font-size: 12px; font-weight: 400; }
.sprite { position: absolute; width: 0; height: 0; }
.ic { width: 16px; height: 16px; flex: none; display: block; }

.app { height: 100vh; overflow: hidden; display: flex; flex-direction: column; }
.top { position: relative; flex: none; height: 65px; }
.desk { height: 4px; background: #fff; }
.ime { position: absolute; left: 764px; top: 0; width: 204px; height: 8px; }
.menurow { height: 30px; display: flex; align-items: center; padding-left: 2px; }
.menu { flex: 0 0 782px; display: flex; justify-content: space-between; }
.menu button { height: 23px; padding: 0 4px; border: 1px solid transparent; background: none; white-space: nowrap; }
.menu .on { background: #b5d8f6; border-color: #2a84d0; }
.tip { margin-left: 32px; width: 160px; color: #2b6a10; text-decoration: none; white-space: nowrap; }
.account { height: 30px; }
.bell { position: absolute; left: 1302px; top: 10px; padding: 0; border: 0; background: none; }
.more { margin-left: auto; padding: 0 3px; width: 14px; height: 26px; font-size: 16px; line-height: 16px; font-weight: 600; }

.row { display: flex; align-items: center; height: 28px; flex: none; }
.edit { height: 26px; }
.draw { height: 30px; }
.bar { display: flex; align-items: center; height: 26px; background: linear-gradient(#fdfdfd, #f1f1f1); }
.grow { flex: 1; }
.std { width: 153px; padding-left: 1px; }
.std .more { margin-left: 9px; }
.calc { width: 551px; }
.floors { margin-left: 26px; }
.t { display: flex; align-items: center; gap: 3px; height: 23px; padding: 0 3px; border: 1px solid transparent; background: none; white-space: nowrap; flex: none; }
.t.on { background: #dcebf8; border-color: #2a7fc8; }
.t:disabled { color: #8c8c8c; }
.dd { width: 12px; height: 23px; padding: 0; border: 0; background: none; display: grid; place-items: center; flex: none; }
.dd::after, .arrow::after { content: ""; border: 3px solid transparent; border-top-color: currentColor; border-bottom: 0; }
.sep { width: 6px; height: 16px; flex: none; background: linear-gradient(#bbb, #bbb) center / 1px 16px no-repeat; }
.grip { width: 7px; height: 16px; flex: none; background: repeating-linear-gradient(#b4b4b4 0 2px, transparent 2px 4px) 4px 0 / 2px 16px no-repeat; }
.mid { width: 10px; }
.tail { width: 30px; }

select { appearance: none; height: 24px; border: 0; border-radius: 0; outline: 0; padding: 0 0 0 3px; background: linear-gradient(45deg, transparent 50%, #111 50%) right 6px center / 4px 4px no-repeat, linear-gradient(-45deg, transparent 50%, #111 50%) right 2px center / 4px 4px no-repeat, linear-gradient(90deg, #fff calc(100% - 14px), transparent 0); }
.c1 { width: 60px; }
.c2 { width: 72px; }
.c3 { width: 58px; margin-left: 1px; }
.axis { display: flex; align-items: center; margin-left: 77px; }

.poi { position: absolute; left: 1250px; top: 14px; width: 52px; background: #fff; box-shadow: 0 2px 8px rgba(0, 0, 0, .45); z-index: 2; }
.poi-title { display: flex; height: 25px; align-items: center; justify-content: space-between; padding: 0 1px 0 3px; color: #999; }
.poi-title button { width: 19px; height: 19px; padding: 0; border: 0; background: #e4e4e4; color: #d0d0d0; }
.poi-start { display: block; width: 100%; height: 23px; padding: 0; background: #f0f0f0; border: 1px solid #555; border-right-width: 2px; border-bottom-width: 2px; }

.body { flex: 1; min-height: 0; display: flex; gap: 4px; }
.side { width: 237px; flex: none; display: flex; flex-direction: column; overflow: hidden; border-left: 2px solid #b8b8b8; border-right: 1px solid #999; }
.side-title { flex: none; display: flex; align-items: center; gap: 3px; height: 16px; margin: 0 0 1px -2px; background: #0453e0; color: #fff; }
.side-title h2 { flex: 1; line-height: 16px; font-size: 13px; }
.sec { flex: none; height: 22px; padding: 0; border: 0; border-top: 1px solid #fff; border-bottom: 1px solid #999; background: #f0f0f0; }
.last { margin-bottom: -12px; }
.side-tools { flex: none; height: 27px; display: flex; align-items: center; gap: 6px; padding: 2px 5px 0; background: linear-gradient(#fff, #eee); }
.side-tools button { padding: 0; border: 0; background: none; }
.tree { flex: 1; min-height: 0; border: 1px solid #888; background: #fff; padding-top: 1px; overflow: hidden; }
.tree span { font-family: "Liberation Mono", monospace; font-size: 10px; }
.tree li { line-height: 16px; }
.node { display: flex; align-items: center; height: 16px; }
.node > .ic { margin-right: 3px; }
.node::before { content: ""; width: 5px; height: 5px; margin: 0 11px 0 7px; border: solid #a8a8a8; border-width: 2px 2px 0 0; transform: rotate(45deg); }
.open > .node::before { width: 6px; height: 6px; margin-right: 10px; border-color: #444; transform: translateY(-2px) rotate(135deg); }
.tree ul { margin-left: 12px; padding-left: 18px; border-left: 1px dotted #888; }
.tree ul li { display: flex; align-items: center; height: 16px; border-left: 1px dotted #888; }
.tree ul li:last-child { border-left-color: transparent; }
.tree ul li::before { content: ""; width: 10px; border-top: 1px dotted #888; }
.tree ul li > .ic, .sel .ic { margin-right: 4px; }
.sel { display: flex; align-items: center; height: 16px; background: #dcdcdc; }
.tree ul li > .book { margin: 0 2px 0 0; }
.node > .cad { margin: 0 2px 0 5px; }
.new { height: 16px; font: bold 9px/9px "DejaVu Sans", sans-serif; color: #222; text-shadow: 1px 1px #ffe000, -1px 1px #ffe000, 1px -1px #ffe000, -1px -1px #ffe000; }

.main { flex: 1; min-width: 0; display: flex; flex-direction: column; }
.view { position: relative; flex: 0 0 262px; overflow: hidden; background: #3a3a3a; }
.scene { display: block; width: 100%; height: 100%; }
.panel { position: absolute; left: 10px; top: 3px; width: 166px; height: 176px; display: flex; flex-direction: column; background: #fff; border: 1px solid #ddd; box-shadow: 0 0 8px rgba(0, 0, 0, .5); }
.panel h3 { height: 30px; padding-left: 7px; line-height: 28px; color: #999; }
.checks { flex: 1; border: 1px solid #888; padding: 2px 3px; }
.checks label { display: flex; align-items: center; gap: 4px; height: 12px; line-height: 12px; }
.checks input { appearance: none; width: 11px; height: 11px; margin: 0; border: 1px solid #777; background: #fff; display: grid; place-items: center; }
.checks input::after { content: ""; width: 6px; height: 3px; border: solid #333; border-width: 0 0 1px 1px; transform: rotate(-45deg); }

.snap { height: 29px; padding-left: 1px; }
.editor { flex: 1; min-height: 0; display: flex; padding-top: 2px; }
.edge { width: 12px; flex: none; background: radial-gradient(circle, #bbb 1px, transparent 1px) 0 14px / 5px 5px; }
.edge button { display: block; width: 12px; height: 12px; padding: 1px; border: 0; background: #f0f0f0; }
.edge svg { display: block; width: 10px; height: 10px; }
.pane { flex: 1; min-width: 0; display: flex; flex-direction: column; }
.etools { height: 27px; flex: none; }
.etools .sep { width: 5px; }
.nav { width: 23px; justify-content: center; }
.total { padding-left: 4px; white-space: nowrap; }
.grid { flex: 1; min-height: 0; display: flex; flex-direction: column; justify-content: space-between; background: #fff; border: 1px solid #aaa; border-bottom: 0; overflow: hidden; }
table { table-layout: fixed; width: 1127px; border-collapse: collapse; }
th, td { padding: 0 0 0 2px; border-right: 1px solid #bdbdbd; border-bottom: 1px solid #bdbdbd; text-align: left; white-space: nowrap; overflow: hidden; font-weight: 400; }
td, tbody th { font-family: "Liberation Sans", "Noto Sans CJK SC", sans-serif; }
thead th { height: 19px; padding: 2px 0 0; line-height: 16px; text-align: center; background: linear-gradient(#fff, #f0f0f0); }
thead th span { font-family: "Liberation Mono", monospace; font-size: 10px; }
thead .hot { background: #fcc878; color: #6a1c10; }
tbody th { padding: 0; text-align: center; background: linear-gradient(90deg, #fff, #f0f0f0); font-size: 11px; }
.r1 th { background: #ffd08a; color: #6a1c10; }
.r1 td, .r2 td { background: #ccffdc; }
.r1 { height: 61px; }
.r2 { height: 29px; }
.r3 { height: 19px; }
tbody td:nth-child(3) { border-left: 1px solid #000; }
.r1 .cur { background: #ace8da; }
.lv { padding: 0; }
.lv svg { display: block; width: 12px; height: 12px; margin: 0 auto; }
.fig { padding: 0; }
.fig svg { display: block; width: 200px; }
.fig text { font: 11px "Liberation Sans", sans-serif; fill: #111; }
.fig .red { fill: #e02010; }
.w-no { width: 33px; } .w-name { width: 73px; } .w-dia { width: 56px; } .w-lv { width: 36px; } .w-fig { width: 33px; }
.w-draw { width: 201px; } .w-calc { width: 166px; } .w-desc { width: 156px; } .w-len { width: 61px; } .w-cnt { width: 38px; }
.w-lap { width: 39px; } .w-loss { width: 49px; } .w-wt { width: 61px; } .w-kind { width: 64px; }
.hscroll { flex: none; height: 6px; background: #f0f0f0; padding: 1px 0 0 17px; }
.hscroll i { display: block; width: 65%; height: 5px; background: #cdcdcd; }
```
